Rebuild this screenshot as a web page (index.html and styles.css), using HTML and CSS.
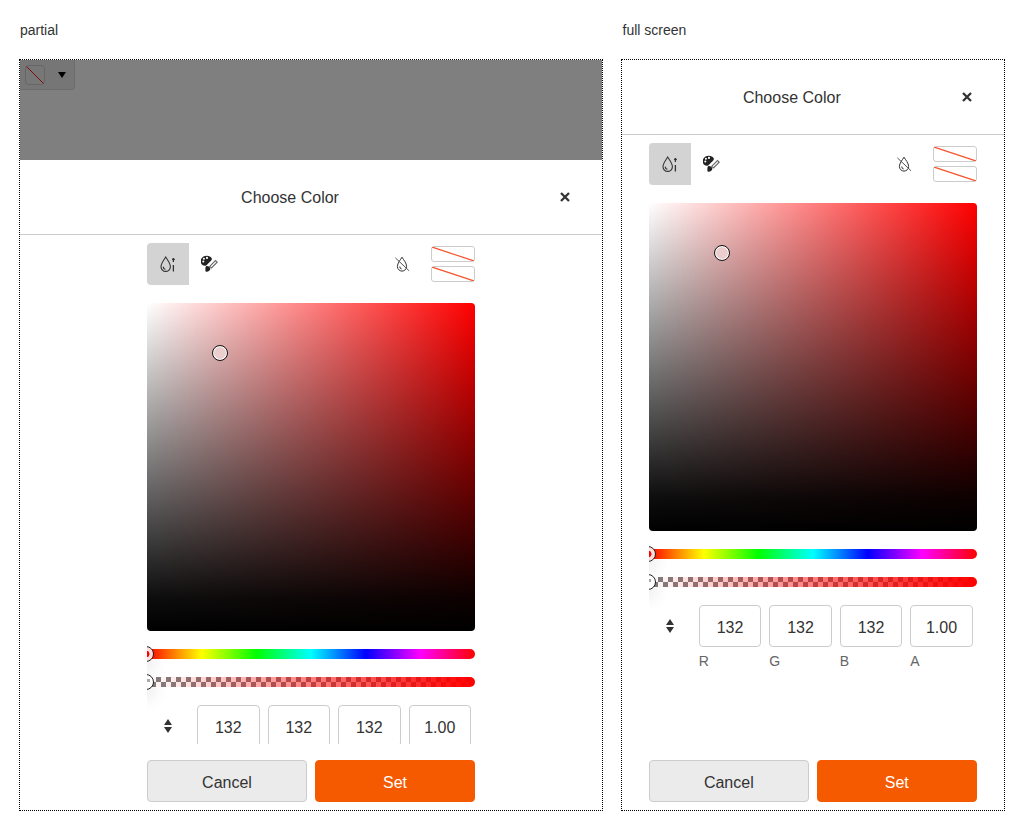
FILE: index.html
```html
<!DOCTYPE html>
<html lang="en">
<head>
    <meta charset="UTF-8">
    <meta name="viewport" content="width=device-width, initial-scale=1.0">
    <title>Color picker</title>
    <link rel="stylesheet" href="styles.css">
</head>
<body>
    <div class="page">
        <section class="demo">
            <div class="demo-label">partial</div>
            <div class="frame">
                <div class="stage">
                    <button class="trigger">
                        <span class="trigger-swatch">
                            <svg width="18" height="18" viewBox="0 0 18 18"><line x1="0.500" y1="0.500" x2="17.500" y2="17.500" stroke="#f00" stroke-width="0.900"/></svg>
                        </span>
                        <span class="trigger-caret"></span>
                    </button>
                    <div class="backdrop"></div>
                </div>
                <div class="dialog">
                    <div class="dialog-header">
                        <div class="dialog-title">Choose Color</div>
                        <div class="dialog-close">
                            <svg width="10" height="10" viewBox="0 0 10 10"><path d="M1 1l8 8M9 1l-8 8" stroke="#333" stroke-width="2.300"/></svg>
                        </div>
                    </div>
                    <div class="dialog-body">
                        <div class="picker">
                            <div class="toolbar">
                                <div class="tab tab-active">
                                    <svg width="18" height="18" viewBox="0 0 18 18" fill="none" stroke="#333" stroke-width="1.1"><path d="M6.7 2C5 5 2 8 2 11.7a4.7 4.7 0 0 0 9.4 0C11.4 8 8.4 5 6.7 2z"/><path d="M4.4 11.6a2.4 2.4 0 0 0 2 2.7"/><path d="M14.4 3v4M13 4.4h2.8M14.4 10v6.6" stroke-width="1.3"/></svg>
                                </div>
                                <div class="tab">
                                    <svg width="18" height="18" viewBox="1 0 18 18"><path d="M6.800.800C3.200.800.700 3.200.700 6.200c0 2.600 1.900 4.500 4.100 4.500 1.300 0 2-.9 2.900-1.800l3.500-3.500c.8-.8.800-1.500.500-2.200C11 1.700 9 .800 6.800.800z" fill="#222"/><circle cx="3.300" cy="6.500" r="1.050" fill="#fff"/><circle cx="3.900" cy="3.700" r="1.050" fill="#fff"/><circle cx="7" cy="2.900" r="1.050" fill="#fff"/><path d="M9.700 11.300l5.800-5.800 1.700 1.700-5.800 5.800z" fill="none" stroke="#666" stroke-width="1.100"/><path d="M7 10.900c1.500 0 3.300 1.100 3.300 2.900 0 1.600-1.800 3-3.600 3-.9 0-1.300-.6-1.300-1.400.1-1.700-.300-4.500 1.600-4.500z" fill="#222"/></svg>
                                </div>
                                <div class="toolbar-right">
                                    <svg width="18" height="18" viewBox="0 0 18 18" fill="none" stroke="#333" stroke-width="1"><path d="M9 2.200C7.400 5 4.400 8 4.400 11.500a4.600 4.600 0 0 0 9.200 0C13.600 8 10.600 5 9 2.200z"/><path d="M6.800 11.500a2.300 2.300 0 0 0 1.900 2.500"/><path d="M2.300 2.800l13.800 13" stroke="#555"/></svg>
                                    <div class="swatches">
                                        <div class="swatch"><svg class="swatch-slash" viewBox="0 0 42 14" preserveAspectRatio="none"><line x1="0" y1="0" x2="42" y2="14" stroke="#f4532b" stroke-width="1.200"/></svg></div>
                                        <div class="swatch"><svg class="swatch-slash" viewBox="0 0 42 14" preserveAspectRatio="none"><line x1="0" y1="0" x2="42" y2="14" stroke="#f4532b" stroke-width="1.200"/></svg></div>
                                    </div>
                                </div>
                            </div>
                            <div class="canvas">
                                <span class="canvas-handle"></span>
                            </div>
                            <div class="slider slider-hue"><span class="slider-handle hue-handle"></span></div>
                            <div class="slider slider-alpha"><span class="slider-handle alpha-handle"></span></div>
                            <div class="inputs">
                                <div class="mode-toggle">
                                    <svg width="8" height="14" viewBox="0 0 8 14" fill="#333"><path d="M4 0l4 6H0zM4 14L0 8h8z"/></svg>
                                </div>
                                <div class="field"><input class="field-input" value="132"><label class="field-label">R</label></div>
                                <div class="field"><input class="field-input" value="132"><label class="field-label">G</label></div>
                                <div class="field"><input class="field-input" value="132"><label class="field-label">B</label></div>
                                <div class="field"><input class="field-input" value="1.00"><label class="field-label">A</label></div>
                            </div>
                        </div>
                    </div>
                    <div class="dialog-footer">
                        <button class="btn btn-cancel">Cancel</button>
                        <button class="btn btn-set">Set</button>
                    </div>
                </div>
            </div>
        </section>

        <section class="demo demo-full">
            <div class="demo-label">full screen</div>
            <div class="frame">
                <div class="dialog">
                    <div class="dialog-header">
                        <div class="dialog-title">Choose Color</div>
                        <div class="dialog-close">
                            <svg width="10" height="10" viewBox="0 0 10 10"><path d="M1 1l8 8M9 1l-8 8" stroke="#333" stroke-width="2.300"/></svg>
                        </div>
                    </div>
                    <div class="dialog-body">
                        <div class="picker">
                            <div class="toolbar">
                                <div class="tab tab-active">
                                    <svg width="18" height="18" viewBox="0 0 18 18" fill="none" stroke="#333" stroke-width="1.1"><path d="M6.7 2C5 5 2 8 2 11.7a4.7 4.7 0 0 0 9.4 0C11.4 8 8.4 5 6.7 2z"/><path d="M4.4 11.6a2.4 2.4 0 0 0 2 2.7"/><path d="M14.4 3v4M13 4.4h2.8M14.4 10v6.6" stroke-width="1.3"/></svg>
                                </div>
                                <div class="tab">
                                    <svg width="18" height="18" viewBox="1 0 18 18"><path d="M6.800.800C3.200.800.700 3.200.700 6.200c0 2.600 1.900 4.500 4.100 4.500 1.300 0 2-.9 2.900-1.800l3.500-3.500c.8-.8.800-1.500.500-2.200C11 1.700 9 .800 6.800.800z" fill="#222"/><circle cx="3.300" cy="6.500" r="1.050" fill="#fff"/><circle cx="3.900" cy="3.700" r="1.050" fill="#fff"/><circle cx="7" cy="2.900" r="1.050" fill="#fff"/><path d="M9.700 11.300l5.800-5.800 1.700 1.700-5.800 5.800z" fill="none" stroke="#666" stroke-width="1.100"/><path d="M7 10.900c1.500 0 3.300 1.100 3.300 2.900 0 1.600-1.800 3-3.600 3-.9 0-1.300-.6-1.300-1.400.1-1.700-.300-4.500 1.600-4.500z" fill="#222"/></svg>
                                </div>
                                <div class="toolbar-right">
                                    <svg width="18" height="18" viewBox="0 0 18 18" fill="none" stroke="#333" stroke-width="1"><path d="M9 2.200C7.400 5 4.400 8 4.400 11.500a4.600 4.600 0 0 0 9.200 0C13.600 8 10.600 5 9 2.200z"/><path d="M6.800 11.500a2.300 2.300 0 0 0 1.900 2.500"/><path d="M2.300 2.800l13.800 13" stroke="#555"/></svg>
                                    <div class="swatches">
                                        <div class="swatch"><svg class="swatch-slash" viewBox="0 0 42 14" preserveAspectRatio="none"><line x1="0" y1="0" x2="42" y2="14" stroke="#f4532b" stroke-width="1.200"/></svg></div>
                                        <div class="swatch"><svg class="swatch-slash" viewBox="0 0 42 14" preserveAspectRatio="none"><line x1="0" y1="0" x2="42" y2="14" stroke="#f4532b" stroke-width="1.200"/></svg></div>
                                    </div>
                                </div>
                            </div>
                            <div class="canvas">
                                <span class="canvas-handle"></span>
                            </div>
                            <div class="slider slider-hue"><span class="slider-handle hue-handle"></span></div>
                            <div class="slider slider-alpha"><span class="slider-handle alpha-handle"></span></div>
                            <div class="inputs">
                                <div class="mode-toggle">
                                    <svg width="8" height="14" viewBox="0 0 8 14" fill="#333"><path d="M4 0l4 6H0zM4 14L0 8h8z"/></svg>
                                </div>
                                <div class="field"><input class="field-input" value="132"><label class="field-label">R</label></div>
                                <div class="field"><input class="field-input" value="132"><label class="field-label">G</label></div>
                                <div class="field"><input class="field-input" value="132"><label class="field-label">B</label></div>
                                <div class="field"><input class="field-input" value="1.00"><label class="field-label">A</label></div>
                            </div>
                        </div>
                    </div>
                    <div class="dialog-footer">
                        <button class="btn btn-cancel">Cancel</button>
                        <button class="btn btn-set">Set</button>
                    </div>
                </div>
            </div>
        </section>
    </div>
</body>
</html>
```

FILE: styles.css
```css
body {
    font-family: "Liberation Sans", Arial, sans-serif;
    margin: 0;
    padding: 0;
    background-color: #fff;
    color: #333;
}
.page {
    display: grid;
    grid-template-columns: 584px 383.6px;
    column-gap: 18px;
    padding: 21px 0 0 19px;
}
.demo-label {
    font-size: 14px;
    line-height: 18px;
    padding-left: 1px;
    margin-bottom: 20px;
}
.demo-full .demo-label {
    padding-left: 1.5px;
}
.frame {
    display: flex;
    flex-direction: column;
    height: 750px;
    border: 1px dotted #000;
}

/* page behind the dialog, greyed out */
.stage {
    position: relative;
    height: 100px;
    flex: none;
}
.backdrop {
    position: absolute;
    top: 0;
    right: 0;
    bottom: 0;
    left: 0;
    background-color: rgba(0, 0, 0, 0.5);
}
.trigger {
    display: flex;
    align-items: center;
    box-sizing: border-box;
    width: 55px;
    height: 30px;
    padding: 4px 0 4px 5px;
    background-color: #ededed;
    border: 1px solid #d8d8d8;
    border-top: none;
    border-left: none;
    border-radius: 0 0 4px 0;
}
.trigger-swatch {
    display: block;
    box-sizing: border-box;
    width: 20px;
    height: 20px;
    background-color: #eee;
    border: 1px solid #ccc;
    border-radius: 4px;
}
.trigger-swatch svg {
    display: block;
}
.trigger-caret {
    width: 0;
    height: 0;
    margin-left: 13px;
    border-left: 4px solid transparent;
    border-right: 4px solid transparent;
    border-top: 6px solid #000;
}

.dialog {
    display: flex;
    flex-direction: column;
    flex: 1;
    min-height: 0;
}
.dialog-header {
    display: flex;
    align-items: center;
    flex: none;
    height: 74px;
    border-bottom: 1px solid #ccc;
}
.dialog-title {
    flex: 1;
    padding-top: 2px;
    text-align: center;
    font-size: 16px;
}
.dialog-close {
    display: flex;
    flex: none;
    width: 42px;
}
.dialog-body {
    flex: 1;
    min-height: 0;
}
.picker {
    display: flex;
    flex-direction: column;
    gap: 18px;
    box-sizing: border-box;
    width: 328px;
    height: 100%;
    margin: 0 auto;
    padding-top: 8px;
    overflow: hidden;
}

.toolbar {
    display: flex;
    align-items: center;
    flex: none;
    height: 42px;
}
.tab {
    display: flex;
    align-items: center;
    justify-content: center;
    width: 42px;
    height: 42px;
    border-radius: 4px 0 0 4px;
}
.tab-active {
    background-color: #d3d3d3;
}
.toolbar-right {
    display: flex;
    align-items: center;
    gap: 20px;
    margin-left: auto;
}
.swatches {
    display: flex;
    flex-direction: column;
    gap: 4px;
}
.swatch {
    box-sizing: border-box;
    width: 44px;
    height: 16px;
    background-color: #fff;
    border: 1px solid #ccc;
    border-radius: 3px;
}
.swatch-slash {
    display: block;
    width: 100%;
    height: 100%;
}

.canvas {
    position: relative;
    flex: none;
    width: 328px;
    height: 328px;
    border-radius: 4px;
    background:
        linear-gradient(to top, #000, rgba(0, 0, 0, 0.95) 10%, rgba(0, 0, 0, 0.53) 50%, transparent),
        linear-gradient(to right, #fff, #f00);
}
.canvas-handle {
    position: absolute;
    left: 65px;
    top: 42px;
    box-sizing: border-box;
    width: 16px;
    height: 16px;
    background-color: #ebcfcf;
    border: 1.5px solid #111;
    border-radius: 50%;
    box-shadow: inset 0 0 0 1px #fff;
}

.slider {
    position: relative;
    flex: none;
    height: 10px;
    border-radius: 5px;
}
.slider-hue {
    background: linear-gradient(to right, #f00, #ff0 16.66%, #0f0 33.33%, #0ff 50%, #00f 66.66%, #f0f 83.33%, #f00);
}
.slider-alpha {
    background:
        linear-gradient(to right, transparent, #f00),
        repeating-conic-gradient(#808080 0 25%, #fff 0 50%) 4px 0 / 10px 10px;
}
.slider-handle {
    position: absolute;
    left: -9px;
    top: -3px;
    box-sizing: border-box;
    width: 16px;
    height: 16px;
    background-color: #fff;
    border: 1.5px solid #222;
    border-radius: 50%;
    box-shadow: 0 8px 16px rgba(0, 0, 0, 0.12);
}
.hue-handle {
    background: radial-gradient(circle, #f00 0, #f00 3.2px, #fdd 3.8px);
}
.alpha-handle {
    background: linear-gradient(#aaa 50%, #fff 50%) center / 7px 7px no-repeat, #fff;
}

.inputs {
    display: flex;
    flex: none;
    gap: 8px;
}
.mode-toggle {
    display: flex;
    align-items: center;
    justify-content: center;
    flex: none;
    width: 42px;
    height: 42px;
}
.field {
    width: 62.5px;
}
.field-input {
    display: block;
    box-sizing: border-box;
    width: 100%;
    height: 42px;
    padding: 3px 0 0;
    font-family: inherit;
    font-size: 16px;
    color: #333;
    text-align: center;
    border: 1px solid #ccc;
    border-radius: 4px;
}
.field-label {
    display: block;
    margin-top: 6px;
    font-size: 14px;
    line-height: 16px;
    color: #666;
}

.dialog-footer {
    display: flex;
    flex: none;
    gap: 8px;
    box-sizing: border-box;
    width: 328px;
    height: 66px;
    margin: 0 auto;
    padding: 16px 0 8px;
}
.btn {
    flex: 1;
    padding: 3px 0 0;
    font-family: inherit;
    font-size: 16px;
    border-radius: 4px;
}
.btn-cancel {
    background-color: #ebebeb;
    border: 1px solid #ccc;
    color: #333;
}
.btn-set {
    background-color: #f55a00;
    border: 1px solid #f55a00;
    color: #fff;
}
```
